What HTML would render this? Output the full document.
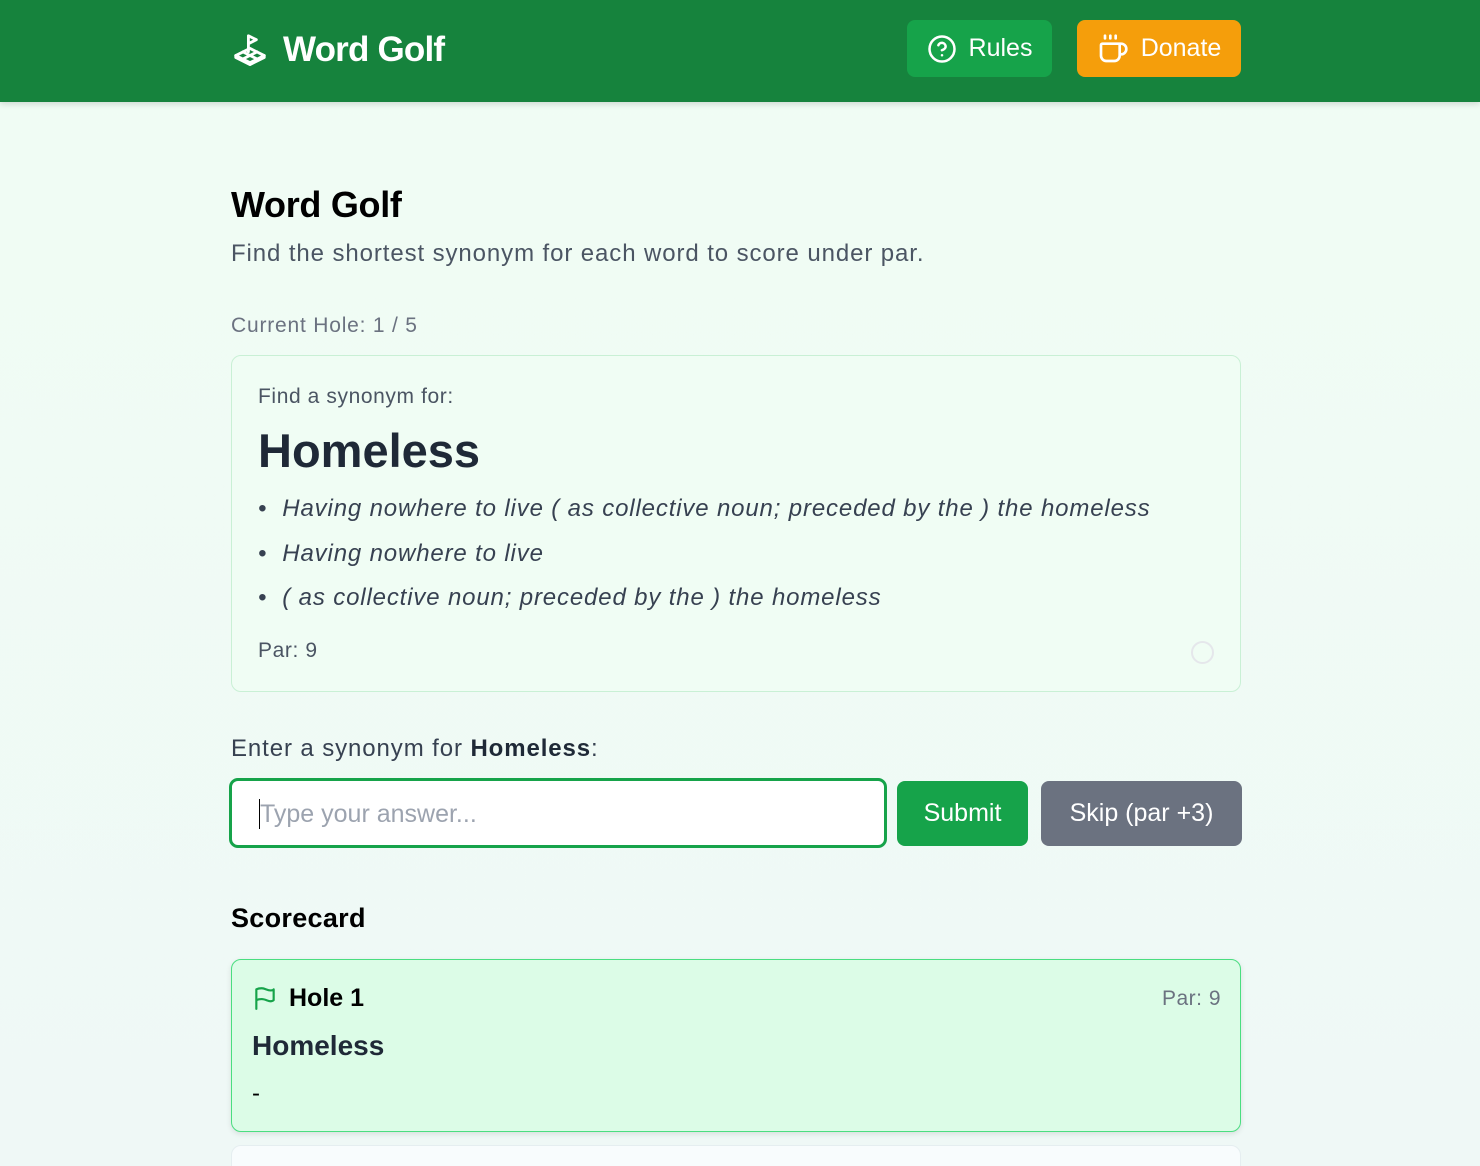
<!DOCTYPE html>
<html><head><meta charset="utf-8"><style>
*{box-sizing:border-box;margin:0;padding:0}
html,body{width:1480px;height:1166px;overflow:hidden}
body{font-family:"Liberation Sans",sans-serif;background:linear-gradient(180deg,#f0fdf4 0%,#eff8f6 100%);position:relative}
.hdr{position:absolute;left:0;top:0;width:1480px;height:102px;background:#16833d;box-shadow:0 2px 6px rgba(0,0,0,.15)}
.abs{position:absolute}
.logo{left:231px;top:30px;color:#fff;font-weight:bold;font-size:35px;display:flex;align-items:center;gap:14px;letter-spacing:-.8px}
.btn{position:absolute;border-radius:8px;color:#fff;font-size:25px;display:flex;align-items:center;justify-content:center;gap:12px}
.card{position:absolute;left:231px;width:1010px;border-radius:10px}
</style></head><body>
<div class="hdr">
 <div class="abs logo"><svg width="38" height="38" viewBox="0 0 24 24" fill="none" stroke="#fff" stroke-width="1.8" stroke-linecap="round" stroke-linejoin="round"><path d="M11 13V3l5 2.5-5 2.5"/><path d="M12 11l9 4.5-9 4.5-9-4.5z"/><path d="M7.5 13.2l9 4.5M16.5 13.2l-9 4.5"/><path d="M3 15.5v1.2l9 4.5 9-4.5v-1.2"/></svg>Word Golf</div>
 <div class="btn" style="left:907px;top:20px;width:145px;height:57px;background:#16a34a"><svg width="30" height="30" viewBox="0 0 24 24" fill="none" stroke="#fff" stroke-width="2" stroke-linecap="round"><circle cx="12" cy="12" r="10"/><path d="M9.1 9a3 3 0 0 1 5.8 1c0 2-3 3-3 3"/><path d="M12 17h.01"/></svg>Rules</div>
 <div class="btn" style="left:1077px;top:20px;width:164px;height:57px;background:#f59e0b"><svg width="32" height="32" viewBox="0 0 24 24" fill="none" stroke="#fff" stroke-width="2" stroke-linecap="round"><path d="M10 2v2M14 2v2M6 2v2"/><path d="M16 8a1 1 0 0 1 1 1v8a4 4 0 0 1-4 4H7a4 4 0 0 1-4-4V9a1 1 0 0 1 1-1h14a4 4 0 1 1 0 8h-1"/></svg>Donate</div>
</div>
<div class="abs" style="left:231px;top:184px;font-size:36px;font-weight:bold;color:#000;letter-spacing:-.3px">Word Golf</div>
<div class="abs" style="left:231px;top:240px;font-size:24px;color:#4b5563;letter-spacing:.9px">Find the shortest synonym for each word to score under par.</div>
<div class="abs" style="left:231px;top:314px;font-size:21px;color:#6b7280;letter-spacing:.8px">Current Hole: 1 / 5</div>
<div class="card" style="top:355px;height:337px;border:1px solid #c9f0d5;background:#f0fdf4">
 <div class="abs" style="left:26px;top:29px;font-size:21px;color:#4b5563;letter-spacing:.6px">Find a synonym for:</div>
 <div class="abs" style="left:26px;top:67px;font-size:47px;font-weight:bold;color:#1f2937">Homeless</div>
 <div class="abs" style="left:26px;top:131px;font-size:24px;font-style:italic;color:#374151;line-height:44.5px;letter-spacing:.85px">
  <div>•&nbsp; Having nowhere to live ( as collective noun; preceded by the ) the homeless</div>
  <div>•&nbsp; Having nowhere to live</div>
  <div>•&nbsp; ( as collective noun; preceded by the ) the homeless</div>
 </div>
 <div class="abs" style="left:26px;top:283px;font-size:21px;color:#4b5563;letter-spacing:.6px">Par: 9</div>
 <div class="abs" style="left:959px;top:285px;width:23px;height:23px;border:2px solid #e5e7eb;border-radius:50%"></div>
</div>
<div class="abs" style="left:231px;top:735px;font-size:24px;color:#374151;letter-spacing:.9px">Enter a synonym for <b style="color:#1f2937">Homeless</b>:</div>
<div class="abs" style="left:229px;top:778px;width:658px;height:70px;border:3px solid #16a34a;border-radius:9px;background:#fff">
 <div class="abs" style="left:27px;top:18px;width:1px;height:30px;background:#000"></div>
 <div class="abs" style="left:28px;top:19px;font-size:25px;color:#9ca3af">Type your answer...</div>
</div>
<div class="btn" style="left:897px;top:781px;width:131px;height:65px;background:#16a34a">Submit</div>
<div class="btn" style="left:1041px;top:781px;width:201px;height:65px;background:#6b7280">Skip (par +3)</div>
<div class="abs" style="left:231px;top:903px;font-size:27px;font-weight:bold;color:#000;letter-spacing:.3px">Scorecard</div>
<div class="card" style="top:959px;height:173px;background:#dcfce7;border:1.5px solid #4ade80;box-shadow:0 2px 6px rgba(0,0,0,.1)">
 <svg class="abs" style="left:20px;top:25px" width="26" height="26" viewBox="0 0 24 24" fill="none" stroke="#16a34a" stroke-width="2" stroke-linecap="round" stroke-linejoin="round"><path d="M4 22V4s2-1 5-1 5 2 8 2 3-1 3-1v10s-1 1-3 1-5-2-8-2-5 1-5 1"/></svg>
 <div class="abs" style="left:57px;top:24px;font-size:25px;font-weight:bold;color:#000">Hole 1</div>
 <div class="abs" style="right:19px;top:27px;font-size:21px;color:#6b7280;letter-spacing:.5px">Par: 9</div>
 <div class="abs" style="left:20px;top:70px;font-size:28px;font-weight:bold;color:#1f2937">Homeless</div>
 <div class="abs" style="left:20px;top:120px;font-size:24px;color:#000">-</div>
</div>
<div class="card" style="top:1145px;height:60px;background:#f8fcfd;border:1px solid #e5eef0"></div>
</body></html>
